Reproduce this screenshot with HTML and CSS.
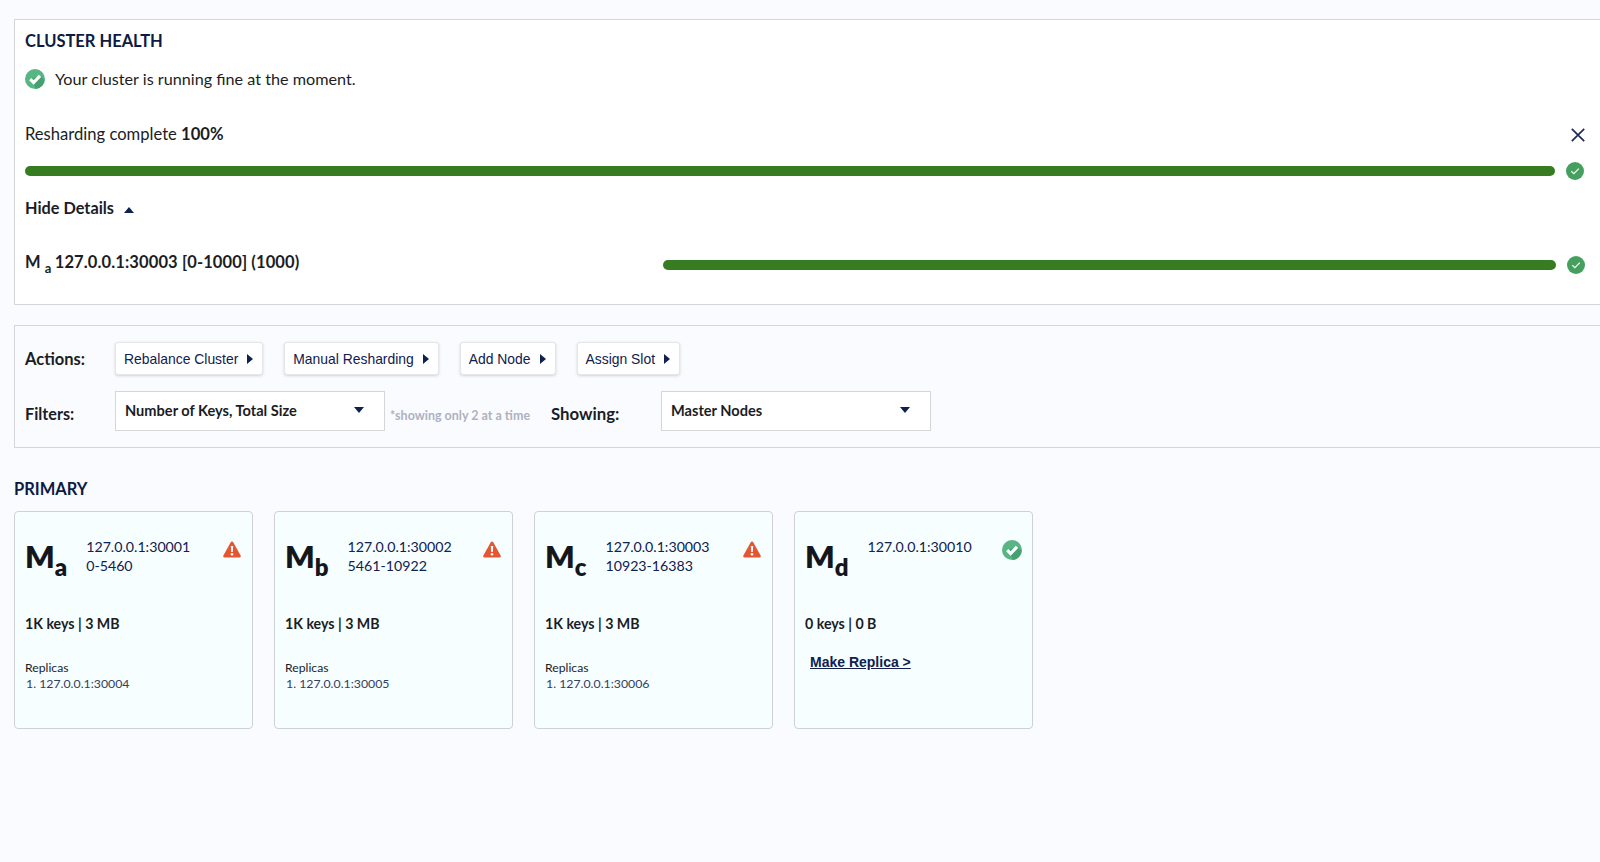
FILE: index.html
```html
<!DOCTYPE html>
<html lang="en">
<head>
<meta charset="utf-8">
<title>Cluster Health</title>
<link rel="stylesheet" href="styles.css">
</head>
<body>
<svg class="defs" width="0" height="0" aria-hidden="true">
  <symbol id="check" viewBox="0 0 20 20">
    <circle cx="10" cy="10" r="10" fill="#5ab585"/>
    <path d="M8.5 14.6 L5 10.5 L15 6.5 L19.5 11 A10 10 0 0 1 11 19.9 Z" fill="#46a06f"/>
    <path d="M5.2 10.2 L8.6 13.5 L15 6.9" fill="none" stroke="#fff" stroke-width="3.2"/>
  </symbol>
  <symbol id="tick" viewBox="0 0 18 18">
    <circle cx="9" cy="9" r="9" fill="#45a05f"/>
    <path d="M5.3 9.3 L7.9 11.7 L12.8 6.6" fill="none" stroke="#eef6ef" stroke-width="1.3"/>
  </symbol>
  <symbol id="warn" viewBox="0 0 18 17">
    <path d="M9 .6 C9.6 .6 10.1 .9 10.4 1.4 L17.6 14.4 C18.1 15.4 17.5 16.6 16.3 16.6 L1.7 16.6 C.5 16.6 -.1 15.4 .4 14.4 L7.6 1.4 C7.9 .9 8.4 .6 9 .6 Z" fill="#e4562f"/>
    <path d="M7.8 5 H10.2 L9.8 11 H8.2 Z" fill="#fff"/>
    <circle cx="9" cy="13.2" r="1.3" fill="#fff"/>
  </symbol>
</svg>

<section class="panel health">
  <h2 class="title">CLUSTER HEALTH</h2>
  <div class="status">
    <svg class="icon-check"><use href="#check"/></svg>
    <span class="status-text">Your cluster is running fine at the moment.</span>
  </div>
  <div class="reshard">
    <span>Resharding complete <b>100%</b></span>
    <svg class="close" viewBox="0 0 14 14"><path d="M.8 .8 L13.2 13.2 M13.2 .8 L.8 13.2"/></svg>
  </div>
  <div class="bar-row">
    <div class="bar"></div>
    <svg class="icon-tick first"><use href="#tick"/></svg>
  </div>
  <div class="toggle"><span>Hide Details</span><i class="caret-up"></i></div>
  <div class="detail">
    <span class="detail-label">M <sub>a</sub> 127.0.0.1:30003 [0-1000] (1000)</span>
    <div class="bar detail-bar"></div>
    <svg class="icon-tick"><use href="#tick"/></svg>
  </div>
</section>

<section class="panel controls">
  <div class="row">
    <span class="label">Actions:</span>
    <div class="buttons">
      <button class="btn">Rebalance Cluster<i class="caret-right"></i></button>
      <button class="btn">Manual Resharding<i class="caret-right"></i></button>
      <button class="btn">Add Node<i class="caret-right"></i></button>
      <button class="btn">Assign Slot<i class="caret-right"></i></button>
    </div>
  </div>
  <div class="row filters">
    <span class="label">Filters:</span>
    <div class="select"><span>Number of Keys, Total Size</span><i class="caret-down"></i></div>
    <span class="note">*showing only 2 at a time</span>
    <span class="label showing">Showing:</span>
    <div class="select"><span>Master Nodes</span><i class="caret-down"></i></div>
  </div>
</section>

<h2 class="title primary">PRIMARY</h2>
<div class="cards">
  <article class="card">
    <div class="head">
      <div class="name">M<sub>a</sub></div>
      <div class="addr">127.0.0.1:30001<br>0-5460</div>
      <svg class="icon-warn"><use href="#warn"/></svg>
    </div>
    <div class="stats">1K keys | 3 MB</div>
    <div class="replicas">Replicas</div>
    <div class="replica">1. 127.0.0.1:30004</div>
  </article>
  <article class="card">
    <div class="head">
      <div class="name">M<sub>b</sub></div>
      <div class="addr">127.0.0.1:30002<br>5461-10922</div>
      <svg class="icon-warn"><use href="#warn"/></svg>
    </div>
    <div class="stats">1K keys | 3 MB</div>
    <div class="replicas">Replicas</div>
    <div class="replica">1. 127.0.0.1:30005</div>
  </article>
  <article class="card">
    <div class="head">
      <div class="name">M<sub>c</sub></div>
      <div class="addr">127.0.0.1:30003<br>10923-16383</div>
      <svg class="icon-warn"><use href="#warn"/></svg>
    </div>
    <div class="stats">1K keys | 3 MB</div>
    <div class="replicas">Replicas</div>
    <div class="replica">1. 127.0.0.1:30006</div>
  </article>
  <article class="card">
    <div class="head">
      <div class="name">M<sub>d</sub></div>
      <div class="addr">127.0.0.1:30010</div>
      <svg class="icon-check card-check"><use href="#check"/></svg>
    </div>
    <div class="stats">0 keys | 0 B</div>
    <a class="make" href="#">Make Replica &gt;</a>
  </article>
</div>
</body>
</html>
```

FILE: styles.css
```css
* { box-sizing: border-box; }
html, body { height: 100%; }
body {
  margin: 0;
  padding: 19px 0 0 14px;
  overflow: hidden;
  background: #f9fbff;
  color: #1b1d24;
  font-family: "Lato", "Noto Sans", sans-serif;
  font-size: 16.5px;
}
.defs { position: absolute; }
.panel {
  border: 1px solid #d4d6d8;
  border-right: 0;
}
.title {
  margin: 0;
  font-size: 16.5px;
  font-weight: 700;
  line-height: 22px;
  color: #0e1a42;
}
.health {
  height: 286px;
  padding: 10px 15px 0 10px;
  background: #fff;
}
.status {
  display: flex;
  align-items: center;
  gap: 10px;
  margin-top: 17px;
  height: 20px;
  font-size: 16.2px;
}
.status-text { padding-bottom: 2px; }
.icon-check { width: 20px; height: 20px; flex: none; }
.reshard {
  display: flex;
  justify-content: space-between;
  align-items: center;
  margin-top: 33px;
  height: 24px;
  font-size: 16.6px;
}
.close { width: 14px; height: 14px; margin: 2px 0 0 0; }
.close path { stroke: #1d2b58; stroke-width: 1.7; fill: none; }
.bar-row {
  display: flex;
  align-items: center;
  margin-top: 20px;
  height: 10px;
}
.bar {
  flex: 1;
  height: 10px;
  border-radius: 5px;
  background: #387c21;
}
.icon-tick { width: 18px; height: 18px; flex: none; margin-left: 11px; }
.icon-tick.first { margin-right: 1px; }
.toggle {
  display: flex;
  align-items: center;
  gap: 10px;
  margin-top: 20px;
  height: 22px;
  font-weight: 700;
  font-size: 16.3px;
}
.caret-up {
  width: 0;
  height: 0;
  margin-top: 5px;
  border: 5px solid transparent;
  border-top: 0;
  border-bottom: 6px solid #10204f;
}
.detail {
  display: flex;
  align-items: flex-start;
  margin-top: 33px;
}
.detail-label {
  width: 638px;
  flex: none;
  line-height: 22px;
  font-weight: 700;
  font-size: 16.5px;
  letter-spacing: .12px;
}
.detail-label sub { font-size: 13px; vertical-align: -5px; line-height: 0; margin-right: -1px; }
.detail-bar { margin-top: 9px; }
.detail .icon-tick { margin-top: 5px; }

.controls {
  height: 123px;
  margin-top: 20px;
  padding: 16px 0 0 10px;
}
.row { display: flex; align-items: center; height: 33px; }
.label { width: 90px; flex: none; font-weight: 700; font-size: 16.5px; }
.buttons { display: flex; gap: 21px; }
.btn {
  display: flex;
  align-items: center;
  height: 33px;
  padding: 0 9px 0 8px;
  gap: 9px;
  background: #fff;
  border: 1px solid #e4e6ea;
  border-radius: 3px;
  box-shadow: 0 1px 3px rgba(0, 0, 0, .16);
  font-family: "Liberation Sans", Arial, sans-serif;
  font-size: 13.9px;
  color: #10204f;
}
.caret-right {
  width: 0;
  height: 0;
  border: 5.5px solid transparent;
  border-right: 0;
  border-left: 6px solid #10204f;
}
.filters { height: 40px; margin-top: 16px; }
.select {
  display: flex;
  align-items: center;
  justify-content: space-between;
  width: 270px;
  height: 40px;
  flex: none;
  padding: 0 20px 2px 9px;
  background: #fff;
  border: 1px solid #d4d6d8;
  font-weight: 700;
  font-size: 14.6px;
}
.caret-down {
  width: 0;
  height: 0;
  border: 5px solid transparent;
  border-bottom: 0;
  border-top: 6px solid #10204f;
}
.note {
  margin: 8px 0 0 5px;
  width: 161px;
  flex: none;
  font-size: 12.5px;
  font-weight: 700;
  color: #adb2c1;
}
.filters .label { margin-top: 4px; }
.filters .label:first-child { font-size: 16.2px; }
.showing { width: 110px; font-size: 16.8px; }

.primary { margin-top: 30px; }
.cards { display: flex; gap: 21px; margin-top: 11px; }
.card {
  width: 239px;
  height: 218px;
  padding: 25px 10px 0 10px;
  background: #f6feff;
  border: 1.5px solid #cfd2d4;
  border-radius: 4px;
}
.head { display: flex; align-items: flex-start; height: 77px; }
.name {
  font-size: 31px;
  font-weight: 800;
  line-height: 38px;
  margin-right: 19px;
  color: #14161c;
}
.name sub { font-size: 24px; line-height: 0; vertical-align: -8px; }
.addr { line-height: 19px; font-size: 14.2px; color: #10204f; }
.icon-warn { width: 18px; height: 17px; margin: 4px 1px 0 auto; }
.card-check { margin: 3px 0 0 auto; }
.stats { line-height: 20px; font-weight: 700; font-size: 14.2px; }
.replicas { margin-top: 26px; line-height: 16px; font-size: 12.2px; }
.replica { line-height: 16px; font-size: 12.3px; margin-left: 1px; color: #33405f; }
.make {
  display: block;
  margin: 18px 0 0 5px;
  line-height: 20px;
  font-family: "Liberation Sans", Arial, sans-serif;
  font-weight: 700;
  font-size: 14px;
  color: #10204f;
}
```
